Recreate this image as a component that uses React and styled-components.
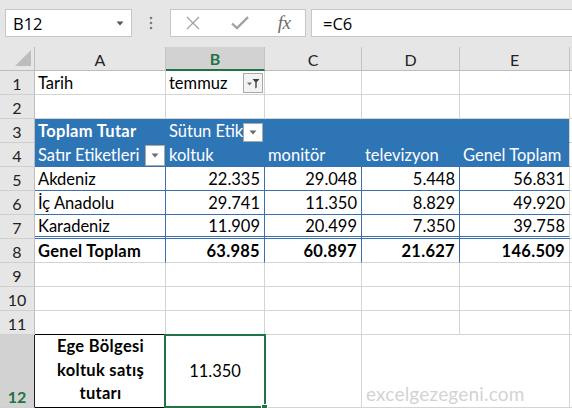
import React from 'react';
import styled, { createGlobalStyle } from 'styled-components';

const GREEN = '#217346';
const BLUE = '#2e75b6';
const PLINE = '#3a6fb0';
const GRID = '#d4d4d4';
const HEAD_BG = '#e6e6e6';
const HEAD_SEL = '#d2d2d2';
const COLS = '35px 131px 99px 97px 98px 110px 1fr';
const FONT = 'Lato, "Open Sans", "Liberation Sans", sans-serif';
const UI_FONT = '"Open Sans", "Liberation Sans", sans-serif';

const GlobalStyle = createGlobalStyle`
  html, body { margin: 0; padding: 0; background: #fff; overflow: hidden; }
  body { font-family: ${FONT}; }
`;

const Screen = styled.div`
  width: 572px;
  height: 408px;
  overflow: hidden;
  background: #fff;
  display: flex;
  flex-direction: column;
`;

/* ---------- formula bar ---------- */
const Toolbar = styled.div`
  flex: none;
  height: 47px;
  box-sizing: border-box;
  background: ${HEAD_BG};
  display: flex;
  align-items: flex-start;
  padding: 9px 0 0 5px;
`;

const Box = styled.div`
  height: 28px;
  box-sizing: border-box;
  background: #fff;
  border: 1px solid #c6c6c6;
  display: flex;
  align-items: center;
  font-family: ${UI_FONT};
  font-size: 16.5px;
  color: #000;
`;

const NameBox = styled(Box)`
  width: 127px;
  padding: 0 7px 0 7px;
  justify-content: space-between;
`;

const Dots = styled.div`
  width: 38px;
  height: 28px;
  display: flex;
  align-items: center;
  justify-content: center;
`;

const FxBox = styled(Box)`
  width: 136px;
  padding-left: 15px;
`;

const IconSlot = styled.span`
  display: flex;
  align-items: center;
  justify-content: center;
  width: ${p => p.$w}px;
  margin-right: ${p => p.$mr || 0}px;
`;

const FxText = styled.span`
  font-family: "Liberation Serif", "DejaVu Serif", serif;
  font-style: italic;
  font-size: 19px;
  color: #6b6b6b;
  letter-spacing: -0.5px;
`;

const FormulaInput = styled(Box)`
  flex: 1;
  margin-left: 5px;
  padding-left: 11px;
  border-right: none;
`;

/* ---------- grid ---------- */
const HeaderRow = styled.div`
  flex: none;
  display: grid;
  grid-template-columns: ${COLS};
  height: 24px;
  background: ${HEAD_BG};
`;

const Corner = styled.div`
  box-sizing: border-box;
  border-right: 1px solid #bdbdbd;
  border-bottom: 1px solid #bdbdbd;
  display: flex;
  align-items: flex-end;
  justify-content: flex-end;
  padding: 0 3px 4px 0;
`;

const ColHead = styled.div`
  box-sizing: border-box;
  display: flex;
  align-items: center;
  justify-content: center;
  font-family: ${FONT};
  font-size: 16px;
  padding-top: 1px;
  color: ${p => (p.$sel ? GREEN : '#222')};
  font-weight: ${p => (p.$sel ? 700 : 400)};
  background: ${p => (p.$sel ? HEAD_SEL : HEAD_BG)};
  border-right: ${p => (p.$last ? 'none' : '1px solid #c3c3c3')};
  border-bottom: ${p => (p.$sel ? `2px solid ${GREEN}` : '1px solid #bdbdbd')};
`;

const SheetRow = styled.div`
  flex: none;
  display: grid;
  grid-template-columns: ${COLS};
  height: ${p => p.$h || 24}px;
`;

const RowHead = styled.div`
  box-sizing: border-box;
  display: flex;
  justify-content: center;
  align-items: ${p => (p.$sel ? 'flex-end' : 'center')};
  padding: ${p => (p.$sel ? '0 0 1px 0' : '1px 0 0 0')};
  font-family: ${FONT};
  font-size: 16px;
  color: ${p => (p.$sel ? GREEN : '#222')};
  font-weight: ${p => (p.$sel ? 700 : 400)};
  background: ${p => (p.$sel ? HEAD_SEL : HEAD_BG)};
  border-right: 1px solid ${p => p.$rb || '#bdbdbd'};
  border-bottom: 1px solid #cfcfcf;
`;

const Cell = styled.div`
  box-sizing: border-box;
  min-width: 0;
  display: flex;
  align-items: center;
  justify-content: ${p =>
    p.$align === 'right' ? 'flex-end' : p.$align === 'center' ? 'center' : 'flex-start'};
  padding: ${p => (p.$align === 'right' ? '1px 4px 0 3px' : '1px 0 0 3px')};
  grid-column: span ${p => p.$span || 1};
  background: ${p => p.$bg || '#fff'};
  color: ${p => p.$color || '#000'};
  font-family: ${FONT};
  font-size: 16.5px;
  font-weight: ${p => (p.$bold ? 700 : 400)};
  letter-spacing: ${p => (p.$bold ? '0.3px' : '0')};
  white-space: nowrap;
  border-right: 1px solid ${p => p.$rb || GRID};
  border-bottom: ${p => p.$bb || `1px solid ${GRID}`};
`;

const CellText = styled.span`
  flex: 1;
  min-width: 0;
  white-space: nowrap;
`;

const DropBtn = styled.span`
  flex: none;
  align-self: flex-end;
  width: 20px;
  height: ${p => p.$h || 20}px;
  margin: 0 ${p => p.$mr ?? 1}px ${p => p.$mb ?? 0}px 0;
  box-sizing: border-box;
  border: 1px solid #a9a9a9;
  background: ${p => (p.$filter ? '#f3f3f3' : '#fff')};
  display: flex;
  align-items: center;
  justify-content: center;
`;

const NoteCell = styled(Cell)`
  flex-direction: column;
  justify-content: center;
  align-items: center;
  padding: 0 0 1px 0;
  line-height: 23.5px;
  border-right: none;
  border-bottom: 1px solid #000;
`;

const SelectedCell = styled(Cell)`
  position: relative;
  padding: 0 0 1px 0;
  &::after {
    content: '';
    position: absolute;
    top: -1px;
    left: -2px;
    right: -2px;
    bottom: -1px;
    border: 2px solid ${GREEN};
    pointer-events: none;
  }
`;

const FillHandle = styled.span`
  position: absolute;
  right: -4px;
  bottom: -4px;
  width: 5px;
  height: 5px;
  background: ${GREEN};
  border: 1px solid #fff;
  z-index: 2;
`;

const Watermark = styled(Cell)`
  align-items: flex-end;
  padding: 0 0 2px 4px;
  font-size: 19px;
  color: #d3d3d3;
  letter-spacing: 0.2px;
`;

/* ---------- icons ---------- */
const SmallArrow = ({ color = '#6b6b6b' }) => (
  <svg width="8" height="5" viewBox="0 0 8 5">
    <path d="M0.5 0.5h7L4 4.5z" fill={color} />
  </svg>
);

const FilterIcon = () => (
  <svg width="14" height="12" viewBox="0 0 14 12">
    <path d="M1 5.5h5l-2.5 3z" fill="#707070" />
    <path d="M6.5 2h7l-2.8 3.3V10.5l-1.4 1V5.3z" fill="#3f3f3f" />
  </svg>
);

const XIcon = () => (
  <svg width="14" height="14" viewBox="0 0 14 14">
    <path d="M1 1L13 13M13 1L1 13" stroke="#a3a3a3" strokeWidth="1.3" fill="none" />
  </svg>
);

const CheckIcon = () => (
  <svg width="18" height="14" viewBox="0 0 18 14">
    <path d="M1 7.5L6 12.2L17 1.2" stroke="#a3a3a3" strokeWidth="2.4" fill="none" />
  </svg>
);

const DotsIcon = () => (
  <svg width="4" height="14" viewBox="0 0 4 14">
    <circle cx="2" cy="2" r="1.3" fill="#7a7a7a" />
    <circle cx="2" cy="7" r="1.3" fill="#7a7a7a" />
    <circle cx="2" cy="12" r="1.3" fill="#7a7a7a" />
  </svg>
);

const CornerTriangle = () => (
  <svg width="16" height="16" viewBox="0 0 16 16">
    <path d="M16 0V16H0z" fill="#bdbdbd" />
  </svg>
);

/* ---------- data ---------- */
const regions = [
  ['Akdeniz', '22.335', '29.048', '5.448', '56.831'],
  ['İç Anadolu', '29.741', '11.350', '8.829', '49.920'],
  ['Karadeniz', '11.909', '20.499', '7.350', '39.758'],
];
const totals = ['Genel Toplam', '63.985', '60.897', '21.627', '146.509'];
const products = ['koltuk', 'monitör', 'televizyon', 'Genel Toplam'];

const Empty = ({ n = 6 }) =>
  Array.from({ length: n }).map((_, i) => (
    <Cell key={i} $rb={i === n - 1 ? 'transparent' : GRID} />
  ));

const blueCell = { $bg: BLUE, $rb: BLUE, $color: '#fff', $bb: `1px solid ${BLUE}` };

export default function App() {
  return (
    <Screen>
      <GlobalStyle />
      <Toolbar>
        <NameBox>
          <span>B12</span>
          <SmallArrow color="#555" />
        </NameBox>
        <Dots>
          <DotsIcon />
        </Dots>
        <FxBox>
          <IconSlot $w={14} $mr={31}>
            <XIcon />
          </IconSlot>
          <IconSlot $w={18} $mr={26}>
            <CheckIcon />
          </IconSlot>
          <IconSlot $w={18}>
            <FxText>fx</FxText>
          </IconSlot>
        </FxBox>
        <FormulaInput>=C6</FormulaInput>
      </Toolbar>

      <HeaderRow>
        <Corner>
          <CornerTriangle />
        </Corner>
        <ColHead>A</ColHead>
        <ColHead $sel>B</ColHead>
        <ColHead>C</ColHead>
        <ColHead>D</ColHead>
        <ColHead>E</ColHead>
        <ColHead $last />
      </HeaderRow>

      <SheetRow>
        <RowHead>1</RowHead>
        <Cell>Tarih</Cell>
        <Cell>
          <CellText>temmuz</CellText>
          <DropBtn $filter $mb={1}>
            <FilterIcon />
          </DropBtn>
        </Cell>
        <Empty n={4} />
      </SheetRow>

      <SheetRow>
        <RowHead>2</RowHead>
        <Empty n={6} />
      </SheetRow>

      <SheetRow>
        <RowHead>3</RowHead>
        <Cell {...blueCell} $bold>
          Toplam Tutar
        </Cell>
        <Cell {...blueCell}>
          <CellText>Sütun Etik</CellText>
          <DropBtn $h={19}>
            <SmallArrow />
          </DropBtn>
        </Cell>
        <Cell {...blueCell} />
        <Cell {...blueCell} />
        <Cell {...blueCell} $rb={GRID} />
        <Cell $rb="transparent" />
      </SheetRow>

      <SheetRow>
        <RowHead>4</RowHead>
        <Cell {...blueCell} $bb={`1px solid ${PLINE}`}>
          <CellText>Satır Etiketleri</CellText>
          <DropBtn $h={21} $mr={0}>
            <SmallArrow />
          </DropBtn>
        </Cell>
        {products.map((p, i) => (
          <Cell key={p} {...blueCell} $bb={`1px solid ${PLINE}`} $rb={i === 3 ? GRID : BLUE}>
            {p}
          </Cell>
        ))}
        <Cell $rb="transparent" />
      </SheetRow>

      {regions.map((r, ri) => (
        <SheetRow key={r[0]}>
          <RowHead>{5 + ri}</RowHead>
          {r.map((v, i) => (
            <Cell
              key={i}
              $align={i === 0 ? 'left' : 'right'}
              $rb={i < 4 ? PLINE : GRID}
              $bb={ri === 2 ? `3px double ${PLINE}` : `1px solid ${PLINE}`}
            >
              {v}
            </Cell>
          ))}
          <Cell $rb="transparent" />
        </SheetRow>
      ))}

      <SheetRow>
        <RowHead>8</RowHead>
        {totals.map((v, i) => (
          <Cell key={i} $bold $align={i === 0 ? 'left' : 'right'} $rb={i < 4 ? PLINE : GRID}>
            {v}
          </Cell>
        ))}
        <Cell $rb="transparent" />
      </SheetRow>

      <SheetRow>
        <RowHead>9</RowHead>
        <Empty n={6} />
      </SheetRow>
      <SheetRow>
        <RowHead>10</RowHead>
        <Empty n={6} />
      </SheetRow>
      <SheetRow>
        <RowHead>11</RowHead>
        <Cell $bb="1px solid #000" />
        <Empty n={5} />
      </SheetRow>

      <SheetRow $h={73}>
        <RowHead $sel $rb="#1e1e1e">
          12
        </RowHead>
        <NoteCell $bold>
          <span>Ege Bölgesi</span>
          <span>koltuk satış</span>
          <span>tutarı</span>
        </NoteCell>
        <SelectedCell $align="center">
          11.350
          <FillHandle />
        </SelectedCell>
        <Cell />
        <Watermark $span={2}>excelgezegeni.com</Watermark>
        <Cell $rb="transparent" />
      </SheetRow>
    </Screen>
  );
}
